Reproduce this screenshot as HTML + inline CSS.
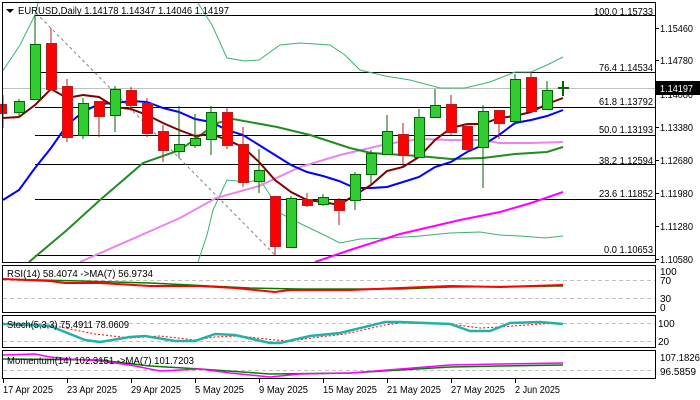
<!DOCTYPE html>
<html><head><meta charset="utf-8"><style>
html,body{margin:0;padding:0;background:#fff;}
svg{display:block;font-family:"Liberation Sans",sans-serif;font-size:10px;}
</style></head><body>
<svg width="700" height="400" viewBox="0 0 700 400" xmlns="http://www.w3.org/2000/svg">
<rect width="700" height="400" fill="#fff"/>
<g stroke="#000" stroke-width="1">
<line x1="35" y1="15.5" x2="655" y2="15.5"/>
<line x1="35" y1="72.5" x2="655" y2="72.5"/>
<line x1="35" y1="107.5" x2="655" y2="107.5"/>
<line x1="35" y1="135.5" x2="655" y2="135.5"/>
<line x1="35" y1="164.5" x2="655" y2="164.5"/>
<line x1="35" y1="199.5" x2="655" y2="199.5"/>
<line x1="35" y1="255.5" x2="655" y2="255.5"/>
</g>
<line x1="2" y1="88.5" x2="655" y2="88.5" stroke="#c0c0c0"/>
<line x1="36" y1="13" x2="275" y2="255" stroke="#808080" stroke-dasharray="3,3"/>
<g fill="#000" text-anchor="end" lengthAdjust="spacingAndGlyphs">
<text x="653" y="15" textLength="59" lengthAdjust="spacingAndGlyphs">100.0 1.15733</text>
<text x="653" y="71" textLength="54" lengthAdjust="spacingAndGlyphs">76.4 1.14534</text>
<text x="653" y="105" textLength="54" lengthAdjust="spacingAndGlyphs">61.8 1.13792</text>
<text x="653" y="133" textLength="54" lengthAdjust="spacingAndGlyphs">50.0 1.13193</text>
<text x="653" y="164" textLength="54" lengthAdjust="spacingAndGlyphs">38.2 1.12594</text>
<text x="653" y="197" textLength="54" lengthAdjust="spacingAndGlyphs">23.6 1.11852</text>
<text x="653" y="253" textLength="49" lengthAdjust="spacingAndGlyphs">0.0 1.10653</text>
</g>
<g fill="none" stroke="#3cb371" stroke-width="1">
<polyline points="2,72 20,45 35,15 38,3"/>
<polyline points="198,3 212,25 227,58 245,61 259,60 280,45 300,43 330,45 345,55 360,70 385,76 410,80 440,88 465,88 490,82 500,78 515,72 531,72 547,65 563,57"/>
<polyline points="198,262 207,235 213,210 220,195 227,180 247,182 260,180 270,195 280,213 297,222 320,233 340,243 360,239 390,238 420,236 450,233 480,232 500,235 520,236 545,238 563,236"/>
</g>
<polyline fill="none" stroke="#ee82ee" stroke-width="2" points="80,262 130,240 180,218 216,198 259,186 300,167 340,155 370,148 387,144 419,139 451,140 483,140 499,143 531,143 563,142"/>
<polyline fill="none" stroke="#ff00ff" stroke-width="2" points="315,262 350,250 400,234 460,220 500,212 531,203 563,192"/>
<polyline fill="none" stroke="#228b22" stroke-width="2" points="29,262 67,230 100,200 143,163 180,150 217,123 233,119 277,127 310,135 350,148 371,153 419,156 451,159 483,158 515,154 547,152 563,147"/>
<polyline fill="none" stroke="#0000ff" stroke-width="2" points="3,200 19,190 35,168 51,148 67,125 83,112 99,104 115,103 131,101 147,102 163,108 179,112 195,119 211,122 227,130 243,135 259,145 275,155 291,165 307,172 323,176 339,181 355,188 371,188 387,187 403,182 419,177 435,167 451,162 467,152 483,145 499,135 515,123 531,120 547,116 563,110"/>
<polyline fill="none" stroke="#800000" stroke-width="2" points="3,118 19,117 35,105 51,89 67,98 83,95 99,97 115,107 131,109 147,115 163,123 179,130 195,136 211,134 227,140 243,147 259,162 275,180 291,192 307,200 323,202 339,205 355,195 371,185 387,171 403,167 419,157 435,140 451,128 467,124 483,124 499,118 515,116 531,112 547,104 563,98"/>
<g stroke-width="1">
<g stroke="#006400" fill="#32cd32">
<line x1="19" y1="99" x2="19" y2="117"/><rect x="14.5" y="101.5" width="10" height="11"/>
<line x1="35" y1="15" x2="35" y2="100"/><rect x="30.5" y="44.5" width="10" height="55"/>
<line x1="83" y1="98" x2="83" y2="139"/><rect x="78.5" y="103.5" width="10" height="32"/>
<line x1="115" y1="86" x2="115" y2="132"/><rect x="110.5" y="89.5" width="10" height="26"/>
<line x1="179" y1="106" x2="179" y2="158"/><rect x="174.5" y="144.5" width="10" height="7"/>
<line x1="195" y1="114" x2="195" y2="148"/><rect x="190.5" y="138.5" width="10" height="7"/>
<line x1="211" y1="106" x2="211" y2="155"/><rect x="206.5" y="112.5" width="10" height="27"/>
<line x1="259" y1="149" x2="259" y2="193"/><rect x="254.5" y="170.5" width="10" height="11"/>
<line x1="291" y1="196" x2="291" y2="248"/><rect x="286.5" y="198.5" width="10" height="49"/>
<line x1="323" y1="194" x2="323" y2="206"/><rect x="318.5" y="197.5" width="10" height="7"/>
<line x1="355" y1="172" x2="355" y2="210"/><rect x="350.5" y="174.5" width="10" height="26"/>
<line x1="371" y1="150" x2="371" y2="184"/><rect x="366.5" y="153.5" width="10" height="21"/>
<line x1="387" y1="115" x2="387" y2="154"/><rect x="382.5" y="131.5" width="10" height="23"/>
<line x1="419" y1="109" x2="419" y2="157"/><rect x="414.5" y="117.5" width="10" height="40"/>
<line x1="435" y1="89" x2="435" y2="117"/><rect x="430.5" y="105.5" width="10" height="12"/>
<line x1="483" y1="105" x2="483" y2="188"/><rect x="478.5" y="111.5" width="10" height="36"/>
<line x1="515" y1="74" x2="515" y2="125"/><rect x="510.5" y="79.5" width="10" height="42"/>
<line x1="547" y1="81" x2="547" y2="109"/><rect x="542.5" y="90.5" width="10" height="19"/>
</g>
<g stroke="#b22222" fill="#ff0000">
<line x1="3" y1="95" x2="3" y2="128"/><rect x="-1.5" y="104.5" width="8" height="9"/>
<line x1="51" y1="28" x2="51" y2="89"/><rect x="46.5" y="43.5" width="10" height="46"/>
<line x1="67" y1="79" x2="67" y2="142"/><rect x="62.5" y="86.5" width="10" height="51"/>
<line x1="99" y1="101" x2="99" y2="137"/><rect x="94.5" y="101.5" width="10" height="15"/>
<line x1="131" y1="87" x2="131" y2="111"/><rect x="126.5" y="90.5" width="10" height="15"/>
<line x1="147" y1="98" x2="147" y2="137"/><rect x="142.5" y="103.5" width="10" height="30"/>
<line x1="163" y1="125" x2="163" y2="162"/><rect x="158.5" y="131.5" width="10" height="19"/>
<line x1="227" y1="108" x2="227" y2="149"/><rect x="222.5" y="112.5" width="10" height="33"/>
<line x1="243" y1="127" x2="243" y2="187"/><rect x="238.5" y="144.5" width="10" height="38"/>
<line x1="275" y1="196" x2="275" y2="255"/><rect x="270.5" y="196.5" width="10" height="50"/>
<line x1="307" y1="193" x2="307" y2="207"/><rect x="302.5" y="199.5" width="10" height="6"/>
<line x1="339" y1="198" x2="339" y2="225"/><rect x="334.5" y="200.5" width="10" height="10"/>
<line x1="403" y1="123" x2="403" y2="166"/><rect x="398.5" y="134.5" width="10" height="21"/>
<line x1="451" y1="95" x2="451" y2="135"/><rect x="446.5" y="104.5" width="10" height="28"/>
<line x1="467" y1="123" x2="467" y2="152"/><rect x="462.5" y="126.5" width="10" height="23"/>
<line x1="499" y1="110" x2="499" y2="139"/><rect x="494.5" y="110.5" width="10" height="13"/>
<line x1="531" y1="72" x2="531" y2="111"/><rect x="526.5" y="77.5" width="10" height="34"/>
</g>
<g stroke="#006400" stroke-width="2"><line x1="563" y1="81" x2="563" y2="96"/><line x1="558" y1="88" x2="569" y2="88"/></g>
</g>
<rect x="2.5" y="2.5" width="653" height="260" fill="none" stroke="#000"/>
<path d="M6 9 L14 9 L10 13 Z" fill="#000"/>
<text x="18" y="14" fill="#000" textLength="211" lengthAdjust="spacingAndGlyphs">EURUSD,Daily  1.14178 1.14347 1.14046 1.14197</text>
<g fill="#000">
<text x="660" y="32" textLength="33" lengthAdjust="spacingAndGlyphs">1.15460</text>
<text x="660" y="64" textLength="33" lengthAdjust="spacingAndGlyphs">1.14780</text>
<text x="660" y="98" textLength="33" lengthAdjust="spacingAndGlyphs">1.14080</text>
<text x="660" y="131" textLength="33" lengthAdjust="spacingAndGlyphs">1.13380</text>
<text x="660" y="164" textLength="33" lengthAdjust="spacingAndGlyphs">1.12680</text>
<text x="660" y="197" textLength="33" lengthAdjust="spacingAndGlyphs">1.11980</text>
<text x="660" y="230" textLength="33" lengthAdjust="spacingAndGlyphs">1.11280</text>
<text x="660" y="263" textLength="33" lengthAdjust="spacingAndGlyphs">1.10580</text>
</g>
<g stroke="#000"><line x1="655" y1="28.5" x2="659" y2="28.5"/><line x1="655" y1="60.5" x2="659" y2="60.5"/><line x1="655" y1="127.5" x2="659" y2="127.5"/><line x1="655" y1="160.5" x2="659" y2="160.5"/><line x1="655" y1="193.5" x2="659" y2="193.5"/><line x1="655" y1="226.5" x2="659" y2="226.5"/><line x1="655" y1="259.5" x2="659" y2="259.5"/></g>
<rect x="656" y="81" width="44" height="14" fill="#000"/>
<text x="660" y="92" fill="#fff" textLength="33" lengthAdjust="spacingAndGlyphs">1.14197</text>
<rect x="2.5" y="265.5" width="653" height="47" fill="none" stroke="#000"/>
<g stroke="#c0c0c0" stroke-dasharray="4,3"><line x1="3" y1="280.5" x2="655" y2="280.5"/><line x1="3" y1="298.5" x2="655" y2="298.5"/></g>
<polyline fill="none" stroke="#008000" stroke-width="1.5" points="3,279 80,281 150,283 250,288 300,289 400,289 450,287 563,286"/>
<polyline fill="none" stroke="#ff0000" stroke-width="2" points="3,279 50,281 65,283 100,283 150,286 200,286 235,288 275,292 290,290 350,290 400,288 450,286 500,287 563,285"/>
<text x="7" y="277" fill="#000" textLength="146" lengthAdjust="spacingAndGlyphs">RSI(14) 58.4074  -&gt;MA(7) 56.9734</text>
<g fill="#000"><text x="660" y="275">100</text><text x="660" y="284">70</text><text x="660" y="302">30</text><text x="660" y="311">0</text></g>
<rect x="2.5" y="315.5" width="653" height="32" fill="none" stroke="#000"/>
<g stroke="#c0c0c0" stroke-dasharray="4,3"><line x1="3" y1="323.5" x2="655" y2="323.5"/><line x1="3" y1="341.5" x2="655" y2="341.5"/></g>
<polyline fill="none" stroke="#ff0000" stroke-dasharray="2,2" points="3,324 50,325 95,334 130,338 160,336 195,340 215,337 240,336 275,340 290,341 320,337 345,334 385,325 400,323 450,324 480,328 500,327 540,324 563,323"/>
<polyline fill="none" stroke="#20b2aa" stroke-width="2.5" points="3,324 50,326 85,340 100,342 130,337 145,336 175,341 195,341 215,334 235,335 270,343 280,343 310,336 340,333 385,322 400,322 450,324 470,331 490,331 510,323 540,322 563,324"/>
<text x="7" y="328" fill="#000" textLength="122" lengthAdjust="spacingAndGlyphs">Stoch(5,3,3) 75.4911 78.0609</text>
<g fill="#000"><text x="658" y="327">100</text><text x="658" y="345">20</text></g>
<rect x="2.5" y="350.5" width="653" height="28" fill="none" stroke="#000"/>
<line x1="3" y1="370.5" x2="655" y2="370.5" stroke="#c0c0c0" stroke-dasharray="4,3"/>
<polyline fill="none" stroke="#008000" stroke-width="1.5" points="3,359 100,360 150,366 200,369 270,374 350,373 400,370 450,367 500,366 563,365"/>
<polyline fill="none" stroke="#ff00ff" stroke-width="1.5" points="3,355 35,354 50,357 70,359 100,361 130,365 160,371 200,369 230,373 270,377 300,374 350,373 400,369 450,365 500,364 563,363"/>
<text x="7" y="364" fill="#000" textLength="187" lengthAdjust="spacingAndGlyphs">Momentum(14) 102.3151  -&gt;MA(7) 101.7203</text>
<g fill="#000"><text x="660" y="361" textLength="40" lengthAdjust="spacingAndGlyphs">107.1826</text><text x="660" y="375" textLength="36" lengthAdjust="spacingAndGlyphs">96.5859</text></g>
<g stroke="#000"><line x1="3.5" y1="379" x2="3.5" y2="383"/><line x1="67.5" y1="379" x2="67.5" y2="383"/><line x1="131.5" y1="379" x2="131.5" y2="383"/><line x1="195.5" y1="379" x2="195.5" y2="383"/><line x1="259.5" y1="379" x2="259.5" y2="383"/><line x1="323.5" y1="379" x2="323.5" y2="383"/><line x1="387.5" y1="379" x2="387.5" y2="383"/><line x1="451.5" y1="379" x2="451.5" y2="383"/><line x1="515.5" y1="379" x2="515.5" y2="383"/></g>
<g fill="#000">
<text x="3" y="393" textLength="50" lengthAdjust="spacingAndGlyphs">17 Apr 2025</text>
<text x="67" y="393" textLength="50" lengthAdjust="spacingAndGlyphs">23 Apr 2025</text>
<text x="131" y="393" textLength="50" lengthAdjust="spacingAndGlyphs">29 Apr 2025</text>
<text x="195" y="393" textLength="49" lengthAdjust="spacingAndGlyphs">5 May 2025</text>
<text x="259" y="393" textLength="49" lengthAdjust="spacingAndGlyphs">9 May 2025</text>
<text x="323" y="393" textLength="54" lengthAdjust="spacingAndGlyphs">15 May 2025</text>
<text x="387" y="393" textLength="54" lengthAdjust="spacingAndGlyphs">21 May 2025</text>
<text x="451" y="393" textLength="54" lengthAdjust="spacingAndGlyphs">27 May 2025</text>
<text x="515" y="393" textLength="45" lengthAdjust="spacingAndGlyphs">2 Jun 2025</text>
</g>
</svg>
</body></html>
